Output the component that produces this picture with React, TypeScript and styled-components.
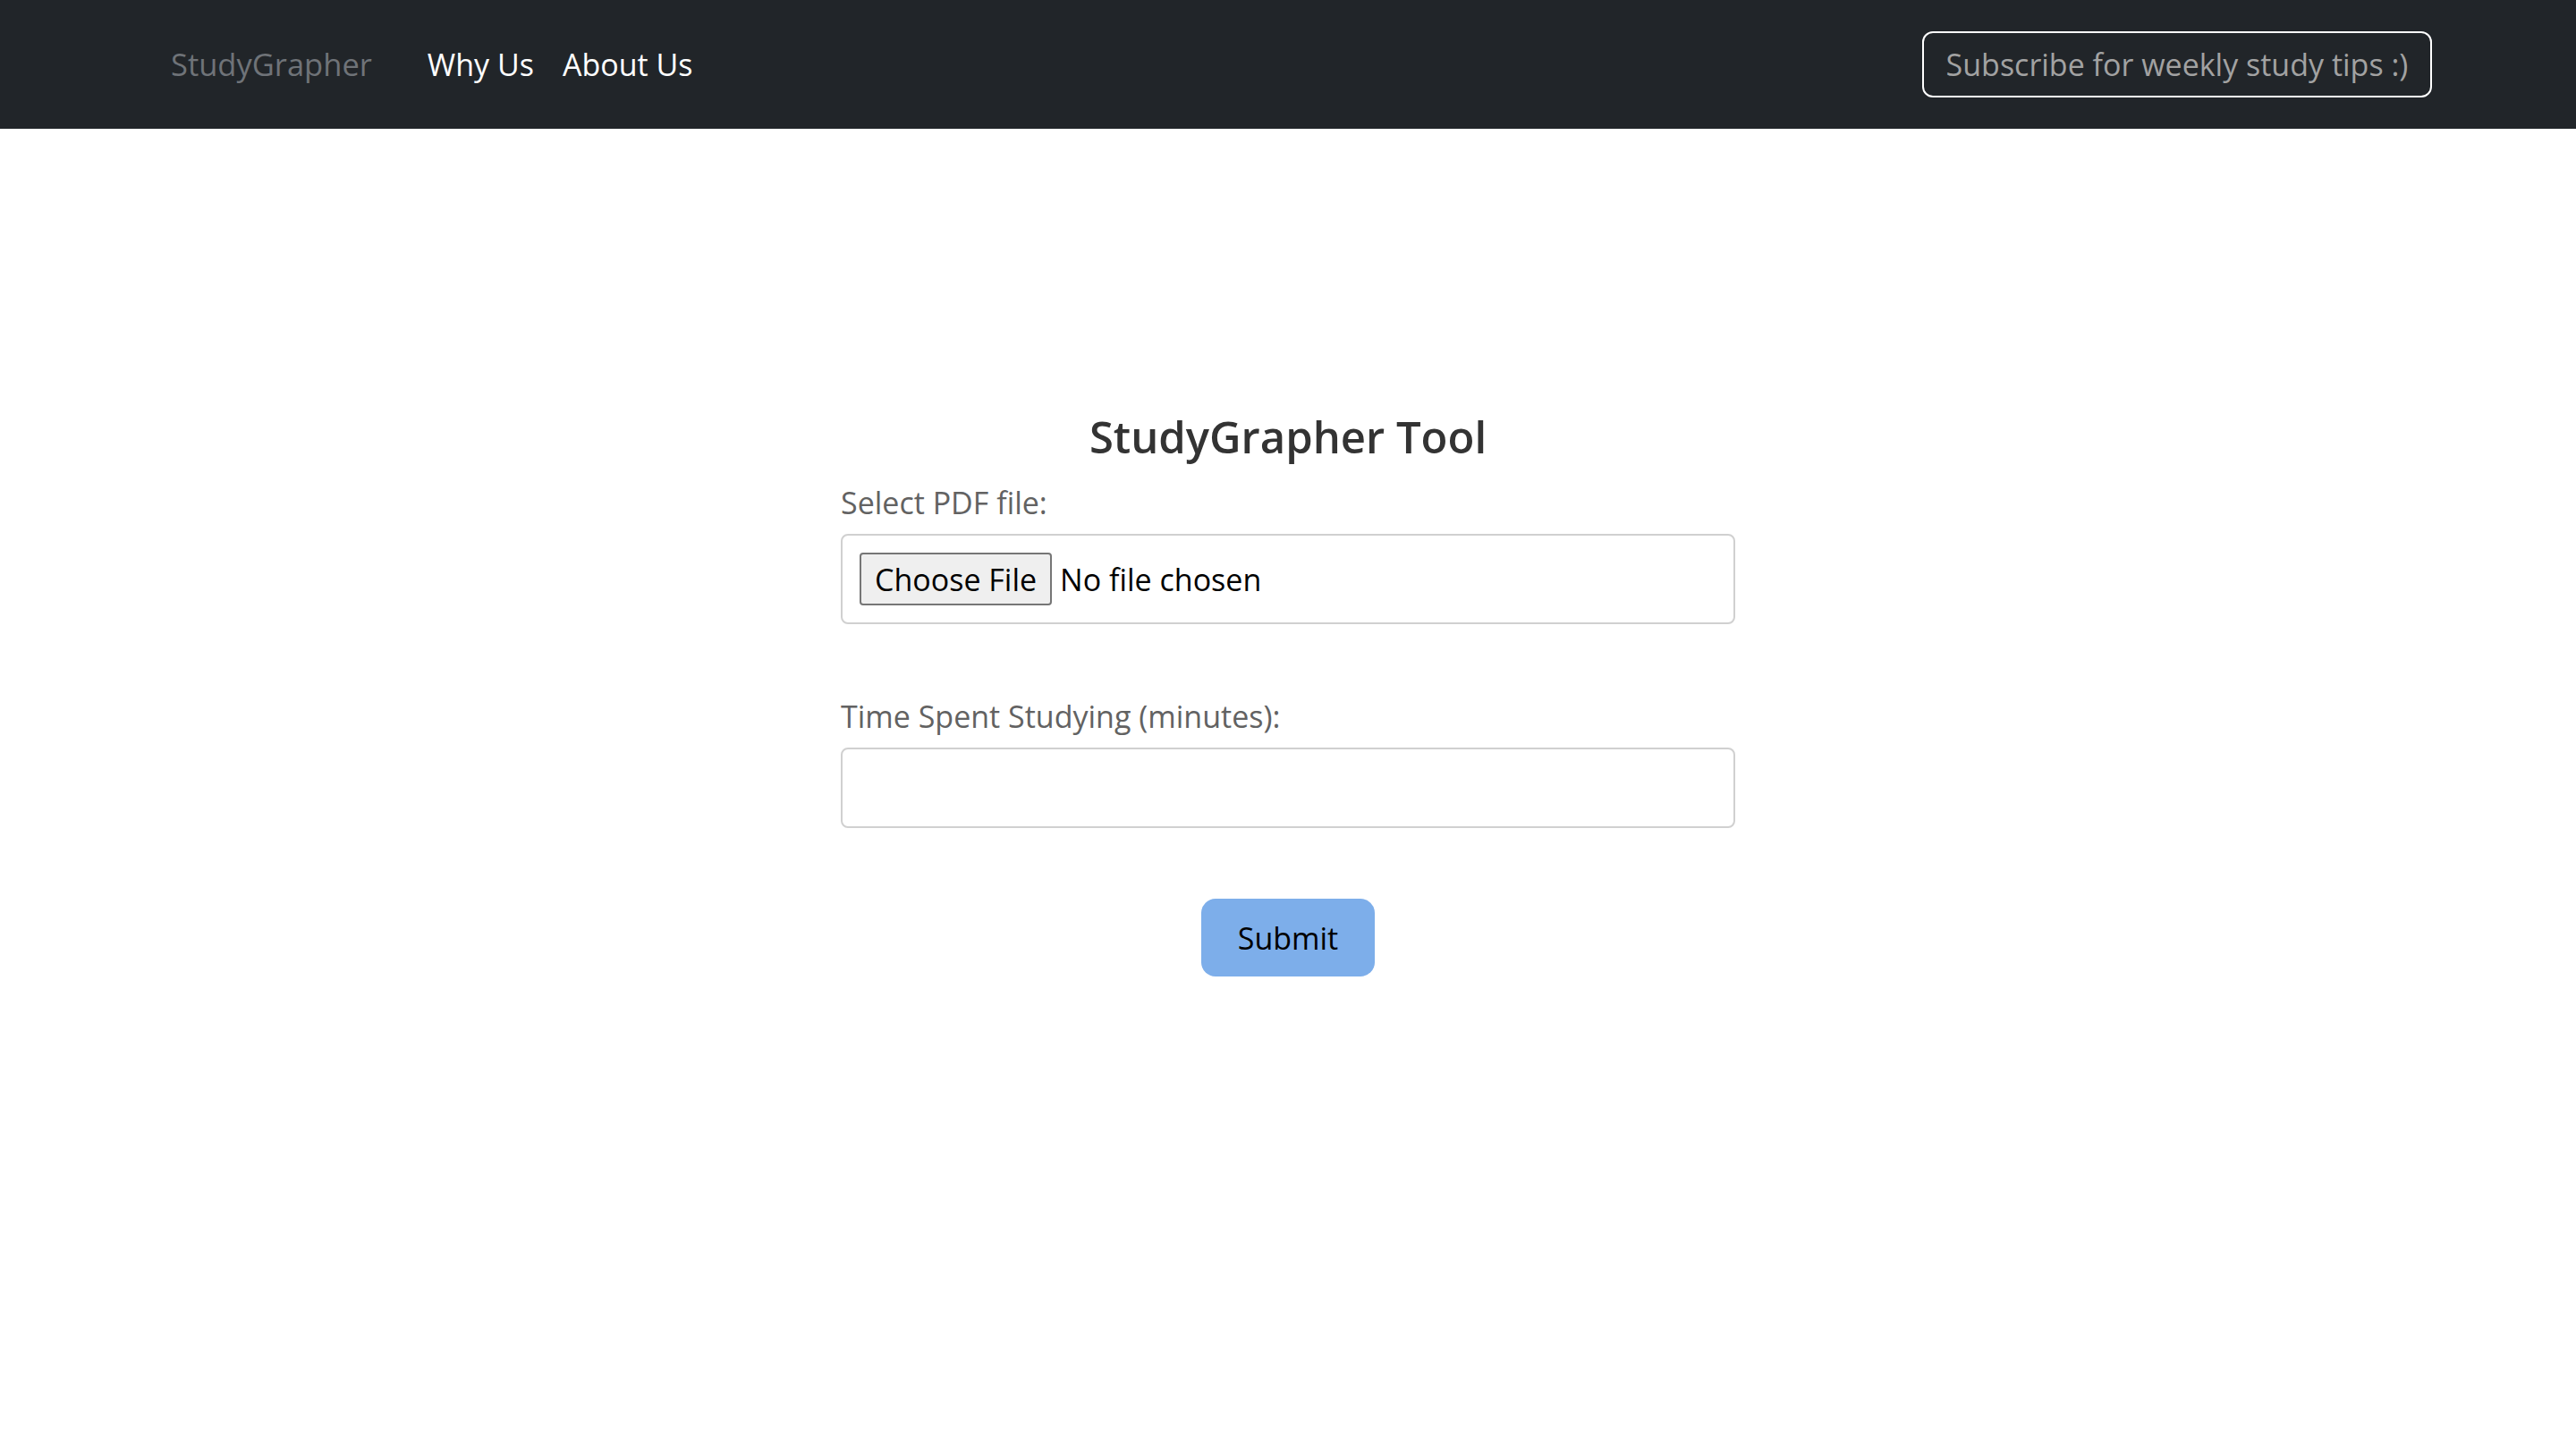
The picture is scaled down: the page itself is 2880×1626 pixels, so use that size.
import React from "react";
import styled, { createGlobalStyle } from "styled-components";

const GlobalStyle = createGlobalStyle`
  html, body {
    margin: 0;
    padding: 0;
    background: #ffffff;
  }
  body {
    font-family: "Open Sans", "Liberation Sans", sans-serif;
    -webkit-font-smoothing: antialiased;
  }
  * { box-sizing: border-box; }
`;

const Page = styled.div`
  min-height: 1626px;
  display: flex;
  flex-direction: column;
`;

const NavBar = styled.nav`
  height: 144px;
  background: #212529;
  display: flex;
  align-items: center;
  padding: 0 161px 0 191px;
`;

const Brand = styled.a`
  font-size: 34.5px;
  line-height: 40px;
  color: #6f7378;
  text-decoration: none;
  margin-right: 62px;
`;

const NavLinks = styled.div`
  display: flex;
  align-items: center;
  gap: 32px;
`;

const NavLink = styled.a`
  font-size: 34px;
  line-height: 40px;
  color: #ffffff;
  text-decoration: none;
`;

const SubscribeButton = styled.button`
  margin-left: auto;
  height: 74px;
  width: 570px;
  padding: 0 20px;
  border: 2px solid #ffffff;
  border-radius: 12px;
  background: transparent;
  color: #a2a2a2;
  font-family: inherit;
  font-size: 34px;
  line-height: 40px;
  white-space: nowrap;
`;

const Main = styled.main`
  display: flex;
  flex-direction: column;
  align-items: center;
  padding-top: 315px;
`;

const Title = styled.h2`
  margin: 0 0 25px;
  font-size: 49px;
  line-height: 58px;
  font-weight: 600;
  color: #333333;
`;

const Form = styled.form`
  width: 1000px;
  display: flex;
  flex-direction: column;
`;

const Field = styled.div<{ $gapAfter: number }>`
  display: flex;
  flex-direction: column;
  gap: 15px;
  margin-bottom: ${(p) => p.$gapAfter}px;
`;

const Label = styled.label`
  font-size: 34px;
  line-height: 40px;
  color: #626262;
`;

const FileBox = styled.div`
  height: 101px;
  border: 2px solid #d0d0d0;
  border-radius: 8px;
  padding: 0 19px;
  display: flex;
  align-items: center;
  gap: 9px;
`;

const FileButton = styled.button`
  height: 59px;
  padding: 0 15px;
  background: #efefef;
  border: 2px solid #767676;
  border-radius: 4px;
  font-family: inherit;
  font-size: 34px;
  line-height: 40px;
  color: #000000;
`;

const FileStatus = styled.span`
  font-size: 34px;
  line-height: 40px;
  color: #000000;
`;

const TextInput = styled.input`
  height: 90px;
  width: 100%;
  border: 2px solid #d0d0d0;
  border-radius: 8px;
  padding: 0 20px;
  font-family: inherit;
  font-size: 34px;
  outline: none;
`;

const SubmitRow = styled.div`
  display: flex;
  justify-content: center;
`;

const SubmitButton = styled.button`
  width: 194px;
  height: 87px;
  border: none;
  border-radius: 16px;
  background: #7daeea;
  color: #000000;
  font-family: inherit;
  font-size: 34px;
  line-height: 40px;
`;

export default function App() {
  return (
    <Page>
      <GlobalStyle />
      <NavBar>
        <Brand href="#">StudyGrapher</Brand>
        <NavLinks>
          <NavLink href="#">Why Us</NavLink>
          <NavLink href="#">About Us</NavLink>
        </NavLinks>
        <SubscribeButton type="button">Subscribe for weekly study tips :)</SubscribeButton>
      </NavBar>
      <Main>
        <Title>StudyGrapher Tool</Title>
        <Form onSubmit={(e) => e.preventDefault()}>
          <Field $gapAfter={83}>
            <Label>Select PDF file:</Label>
            <FileBox>
              <FileButton type="button">Choose File</FileButton>
              <FileStatus>No file chosen</FileStatus>
            </FileBox>
          </Field>
          <Field $gapAfter={79}>
            <Label>Time Spent Studying (minutes):</Label>
            <TextInput type="number" />
          </Field>
          <SubmitRow>
            <SubmitButton type="submit">Submit</SubmitButton>
          </SubmitRow>
        </Form>
      </Main>
    </Page>
  );
}
